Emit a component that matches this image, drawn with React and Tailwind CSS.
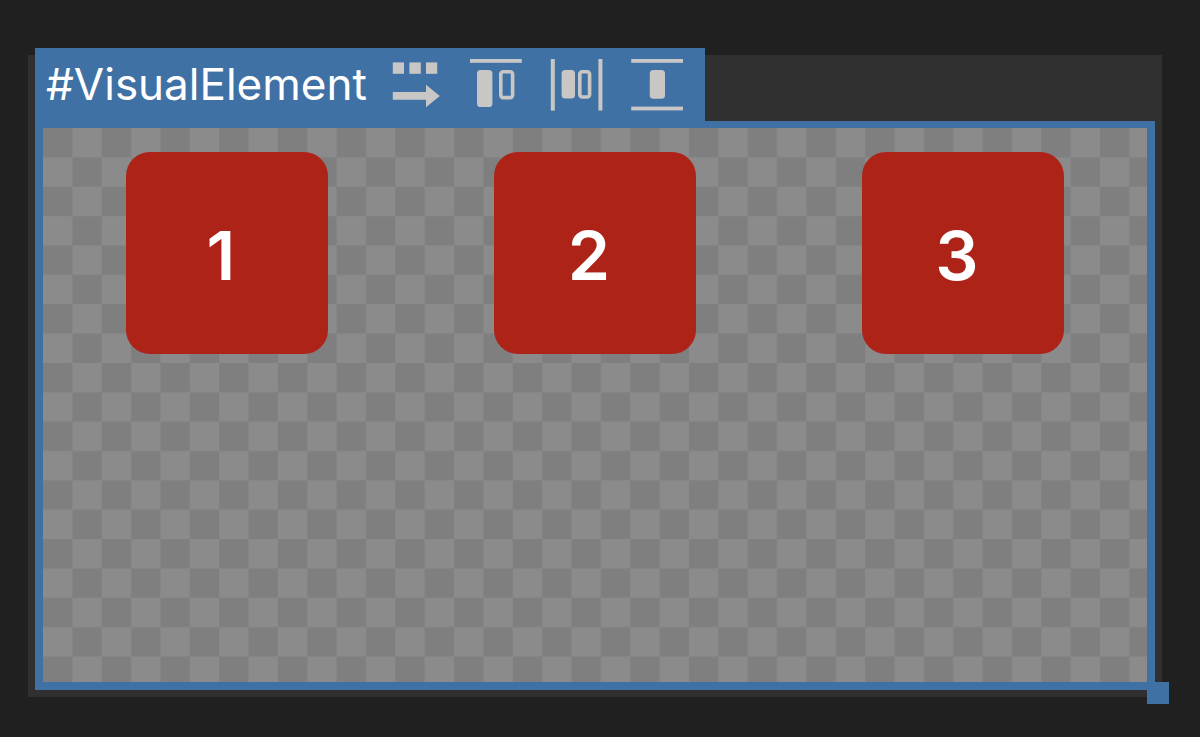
const ITEMS = ["1", "2", "3"];

function Checkerboard() {
  return (
    <svg
      className="absolute inset-0 h-full w-full"
      viewBox="0 0 376 190"
      preserveAspectRatio="xMinYMin slice"
      aria-hidden="true"
    >
      <defs>
        <pattern id="checker" width="20" height="20" patternUnits="userSpaceOnUse">
          <rect width="20" height="20" fill="#8b8b8b" />
          <rect width="10" height="10" fill="#7f7f7f" />
          <rect x="10" y="10" width="10" height="10" fill="#7f7f7f" />
        </pattern>
      </defs>
      <rect width="376" height="376" fill="url(#checker)" />
    </svg>
  );
}

function ToolButton({ label, children }) {
  return (
    <button type="button" aria-label={label} className="shrink-0 text-[#c8c7c6]">
      <svg className="block h-[52px] w-[54px]" viewBox="0 0 54 52" fill="currentColor" aria-hidden="true">
        {children}
      </svg>
    </button>
  );
}

function Toolbar() {
  return (
    <div className="flex gap-[26px]">
      <ToolButton label="Flex direction">
        <rect x="2.8" y="3.4" width="11.2" height="11.4" />
        <rect x="19.4" y="3.4" width="11.4" height="11.4" />
        <rect x="36" y="3.4" width="11.2" height="11.4" />
        <path d="M2.8 33H36V25.8L49.8 37L36 48.2V40.8H2.8Z" />
      </ToolButton>
      <ToolButton label="Align items">
        <rect x="0" y="0" width="51.8" height="3.8" />
        <rect x="7" y="11" width="15.4" height="37" rx="3.6" />
        <rect x="30.8" y="12.8" width="11.8" height="25.8" rx="2.4" fill="none" stroke="currentColor" strokeWidth="3.6" />
      </ToolButton>
      <ToolButton label="Justify content">
        <rect x="0.8" y="0" width="4" height="51.6" />
        <rect x="11.6" y="11" width="13.4" height="28.6" rx="3.6" />
        <rect x="29.8" y="12.8" width="9.8" height="25.2" rx="2.4" fill="none" stroke="currentColor" strokeWidth="3.6" />
        <rect x="48.4" y="0" width="4" height="51.6" />
      </ToolButton>
      <ToolButton label="Align content">
        <rect x="1.2" y="0" width="51.8" height="3.8" />
        <rect x="19.8" y="11" width="15.2" height="28.8" rx="3.6" />
        <rect x="1.2" y="47.6" width="51.8" height="3.8" />
      </ToolButton>
    </div>
  );
}

export default function App() {
  return (
    <main className="flex min-h-screen flex-col bg-[#202020] pt-[55px] pr-[38px] pb-[40px] pl-[28px] font-['Inter',sans-serif] text-white">
      <section className="flex flex-1 flex-col bg-[#303030] px-[7px] pb-[7px]">
        <header className="-mt-[7px] flex h-[73px] items-center gap-[23px] self-start bg-[#4071a4] pr-[21px] pl-[11px]">
          <h1 className="pb-0.5 text-[44px] leading-[52px]">#VisualElement</h1>
          <Toolbar />
        </header>
        <div className="relative flex-1 border-8 border-t-7 border-[#4071a4]">
          <Checkerboard />
          <div className="relative flex justify-around pt-6">
            {ITEMS.map((item) => (
              <div
                key={item}
                className="flex size-[202px] items-center justify-center rounded-3xl bg-[#ad2318] pt-1 pr-3 text-[68px] leading-[80px] font-semibold"
              >
                {item}
              </div>
            ))}
          </div>
          <span className="absolute -right-[22px] -bottom-[22px] size-[22px] bg-[#4071a4]" />
        </div>
      </section>
    </main>
  );
}
